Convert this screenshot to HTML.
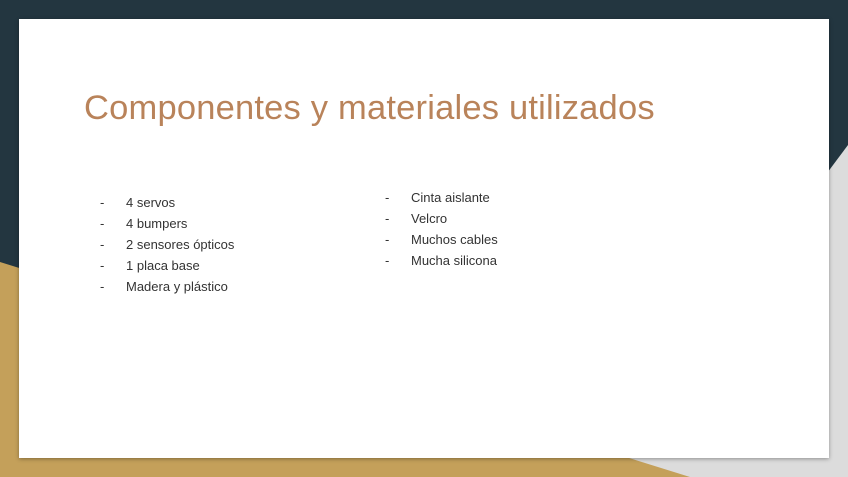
<!DOCTYPE html>
<html><head><meta charset="utf-8"><style>
body{margin:0;width:848px;height:477px;overflow:hidden;position:relative;background:#233640;font-family:"Liberation Sans",sans-serif}
svg.bg{position:absolute;left:0;top:0}
.card{position:absolute;left:19px;top:19px;width:810px;height:439px;background:#fff;box-shadow:0 1px 4px rgba(0,0,0,.35)}
h1{position:absolute;left:84px;top:89px;margin:0;font-weight:normal;font-size:34.5px;color:#b9835a;white-space:nowrap;letter-spacing:0.2px}
.li{position:absolute;font-size:13px;color:#333;white-space:nowrap;line-height:16px}
.d{position:absolute;font-size:13px;color:#333;line-height:16px}
</style></head><body>
<svg class="bg" width="848" height="477">
<polygon points="848,145 848,477 600,477" fill="#dcdcdc"/>
<polygon points="0,262 690,477 0,477" fill="#c4a05a"/>
</svg>
<div class="card"></div>
<h1>Componentes y materiales utilizados</h1>
<div class="d" style="left:100px;top:195px">-</div><div class="li" style="left:126px;top:195px">4 servos</div>
<div class="d" style="left:100px;top:216px">-</div><div class="li" style="left:126px;top:216px">4 bumpers</div>
<div class="d" style="left:100px;top:237px">-</div><div class="li" style="left:126px;top:237px">2 sensores ópticos</div>
<div class="d" style="left:100px;top:258px">-</div><div class="li" style="left:126px;top:258px">1 placa base</div>
<div class="d" style="left:100px;top:279px">-</div><div class="li" style="left:126px;top:279px">Madera y plástico</div>
<div class="d" style="left:385px;top:190px">-</div><div class="li" style="left:411px;top:190px">Cinta aislante</div>
<div class="d" style="left:385px;top:211px">-</div><div class="li" style="left:411px;top:211px">Velcro</div>
<div class="d" style="left:385px;top:232px">-</div><div class="li" style="left:411px;top:232px">Muchos cables</div>
<div class="d" style="left:385px;top:253px">-</div><div class="li" style="left:411px;top:253px">Mucha silicona</div>
</body></html>
